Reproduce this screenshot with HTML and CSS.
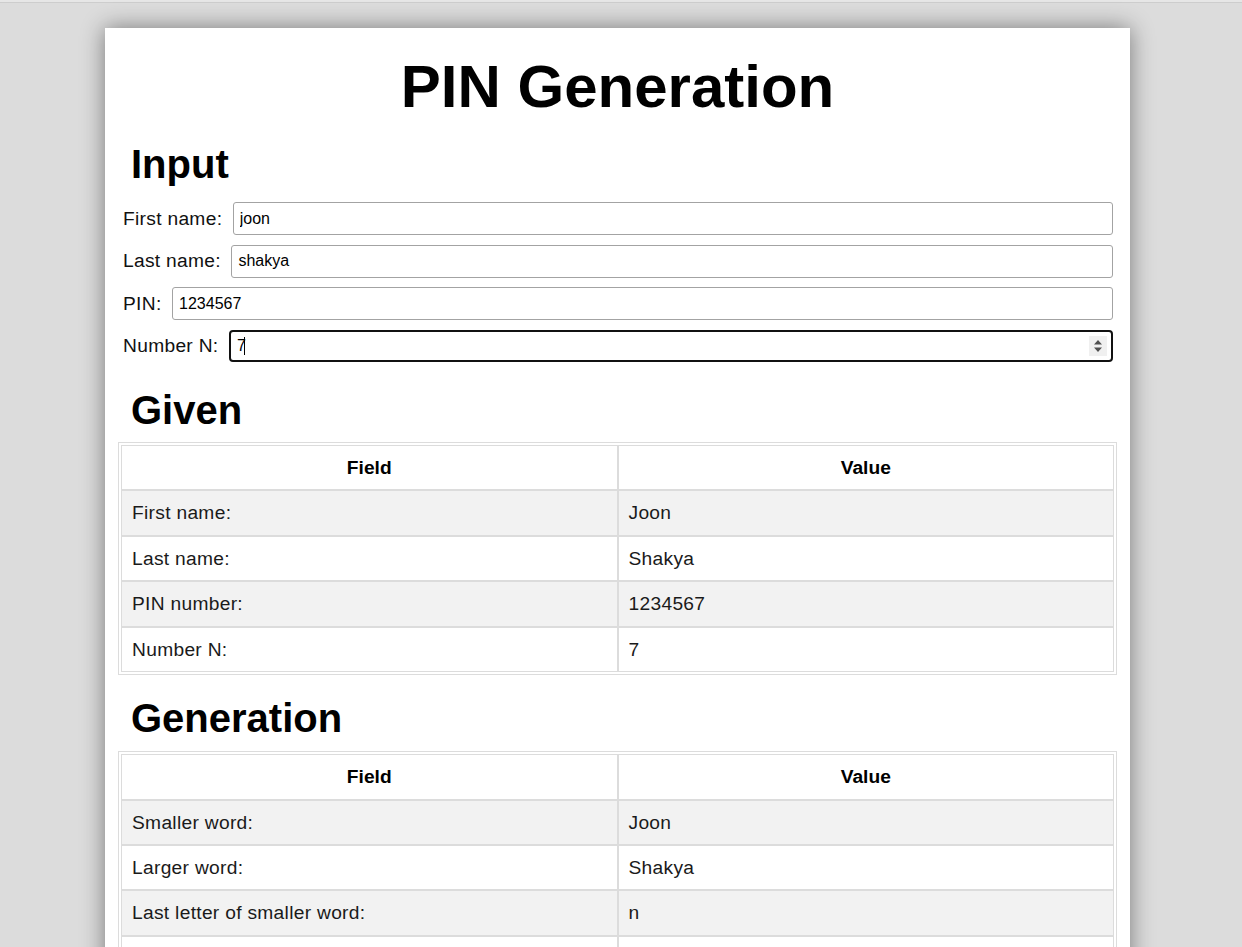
FILE: index.html
```html
<!DOCTYPE html>
<html lang="en">
<head>
<meta charset="utf-8">
<title>PIN Generation</title>
<link rel="stylesheet" href="styles.css">
</head>
<body>
<div class="topline"></div>
<main class="sheet">
  <h1 class="title">PIN Generation</h1>

  <h2 class="section">Input</h2>
  <form class="form">
    <div class="row">
      <label class="label" for="fn">First name:</label>
      <input class="field" id="fn" type="text" value="joon">
    </div>
    <div class="row">
      <label class="label" for="ln">Last name:</label>
      <input class="field" id="ln" type="text" value="shakya">
    </div>
    <div class="row">
      <label class="label" for="pin">PIN:</label>
      <input class="field" id="pin" type="text" value="1234567">
    </div>
    <div class="row">
      <label class="label" for="nn">Number N:</label>
      <div class="numwrap">
        <input class="field field-focus" id="nn" type="text" value="7">
        <span class="caret"></span>
        <span class="spin">
          <svg width="18" height="20" viewBox="0 0 18 20"><path d="M9 4 L13 8.5 L5 8.5 Z M5 11.5 L13 11.5 L9 16 Z" fill="#505050"/></svg>
        </span>
      </div>
    </div>
  </form>

  <h2 class="section">Given</h2>
  <table class="grid">
    <thead>
      <tr><th>Field</th><th>Value</th></tr>
    </thead>
    <tbody>
      <tr><td>First name:</td><td>Joon</td></tr>
      <tr><td>Last name:</td><td>Shakya</td></tr>
      <tr><td>PIN number:</td><td>1234567</td></tr>
      <tr><td>Number N:</td><td>7</td></tr>
    </tbody>
  </table>

  <h2 class="section">Generation</h2>
  <table class="grid">
    <thead>
      <tr><th>Field</th><th>Value</th></tr>
    </thead>
    <tbody>
      <tr><td>Smaller word:</td><td>Joon</td></tr>
      <tr><td>Larger word:</td><td>Shakya</td></tr>
      <tr><td>Last letter of smaller word:</td><td>n</td></tr>
      <tr><td>First letter of larger word:</td><td>S</td></tr>
      <tr><td>Generated PIN:</td><td>n1234567S</td></tr>
    </tbody>
  </table>
</main>
</body>
</html>
```

FILE: styles.css
```css
html {
  background: #dcdcdc;
}

body {
  margin: 0;
  background: #dcdcdc;
  font-family: "Liberation Sans", Arial, sans-serif;
  color: #000;
  overflow: hidden;
}

.topline {
  height: 2px;
  background: #e6e6e6;
  border-bottom: 1px solid #cdcdcd;
}

.sheet {
  width: 1025px;
  box-sizing: border-box;
  margin: 25px 0 0 105px;
  padding: 24px 13px 40px;
  background: #fff;
  box-shadow: 0 0 22px rgba(0, 0, 0, 0.45);
}

.title {
  margin: 0 0 20px;
  font-size: 60px;
  line-height: 69px;
  font-weight: bold;
  text-align: center;
}

.section {
  margin: 0 0 15px;
  padding-left: 13px;
  font-size: 40px;
  line-height: 46px;
  font-weight: bold;
}

.form {
  margin: 0 0 25px;
  padding: 0 4px 0 5px;
  display: flex;
  flex-direction: column;
  gap: 9.7px;
}

.row {
  display: flex;
  align-items: center;
  gap: 10.5px;
}

.label {
  font-size: 19.2px;
  letter-spacing: 0.3px;
  color: #111;
  white-space: nowrap;
}

.field {
  flex: 1;
  width: 100%;
  height: 33px;
  box-sizing: border-box;
  margin: 0;
  padding: 0 6px;
  border: 1px solid #a3a3a3;
  border-radius: 3px;
  font-family: "Liberation Sans", Arial, sans-serif;
  font-size: 16px;
  color: #000;
  background: #fff;
  outline: none;
}

.numwrap {
  flex: 1;
  position: relative;
  display: flex;
}

.field-focus {
  height: 32px;
  border: 2px solid #111;
  border-radius: 4px;
  padding: 0 6px;
}

.caret {
  position: absolute;
  left: 15px;
  top: 7px;
  width: 1px;
  height: 18px;
  background: #000;
}

.spin {
  position: absolute;
  right: 6px;
  top: 6px;
  width: 18px;
  height: 20px;
  background: #f0f0f0;
  display: flex;
  align-items: center;
  justify-content: center;
}

.form + .section {
  margin-bottom: 9px;
}

.grid + .section {
  margin-bottom: 10px;
}

.grid {
  width: 100%;
  box-sizing: border-box;
  border: 1px solid #dcdcdc;
  padding: 2px;
  border-spacing: 0;
  margin: 0 0 20px;
  table-layout: fixed;
}

.grid th,
.grid td {
  width: 50%;
  border: 1px solid #dcdcdc;
  padding: 11px 10px;
  font-size: 19.2px;
  line-height: 21.4px;
  text-align: left;
  color: #1a1a1a;
}

.grid td {
  letter-spacing: 0.3px;
}

.grid th {
  text-align: center;
  font-weight: bold;
  color: #000;
}

.grid tbody tr:nth-child(odd) td {
  background: #f2f2f2;
}
```
